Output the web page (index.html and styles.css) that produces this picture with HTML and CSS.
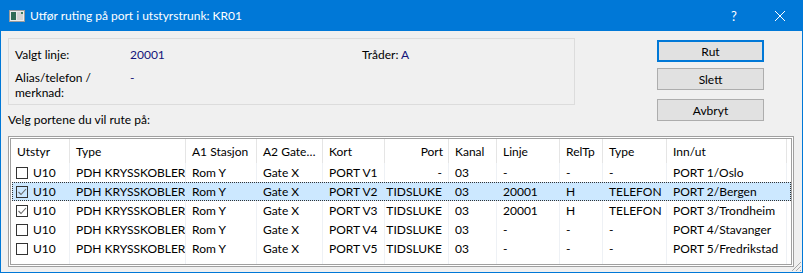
FILE: index.html
```html
<!DOCTYPE html>
<html lang="no">
<head>
<meta charset="utf-8">
<title>Utfør ruting</title>
<link rel="stylesheet" href="styles.css">
</head>
<body>
<div class="window">
  <div class="titlebar">
    <svg class="appicon" width="16" height="12" viewBox="0 0 16 12">
      <rect x="0.5" y="0.5" width="15" height="11" fill="#ececec" stroke="#9c9c9c"/>
      <rect x="2" y="2" width="5" height="8" fill="#2f6b55"/>
      <rect x="8" y="2" width="6" height="8" fill="#d4d4d4"/>
      <rect x="12" y="2" width="2" height="2" fill="#3f7f60"/>
    </svg>
    <span class="title">Utfør ruting på port i utstyrstrunk: KR01</span>
    <span class="tbtn help">?</span>
    <span class="tbtn close">
      <svg width="10" height="10" viewBox="0 0 10 10"><path d="M0 0L10 10M10 0L0 10" stroke="#fff" stroke-width="1"/></svg>
    </span>
  </div>
  <div class="content">
    <div class="top">
      <div class="left">
        <div class="panel">
          <span>Valgt linje:</span><span class="val">20001</span><span>Tråder: <span class="val">A</span></span>
          <span>Alias/telefon /<br>merknad:</span><span class="val">-</span><span></span>
        </div>
        <div class="prompt">Velg portene du vil rute på:</div>
      </div>
      <div class="buttons">
        <div class="btn default">Rut</div>
        <div class="btn">Slett</div>
        <div class="btn spaced">Avbryt</div>
      </div>
    </div>
    <div class="list">
      <div class="lv">
        <div class="cols head">
          <div class="cell">Utstyr</div>
          <div class="cell">Type</div>
          <div class="cell">A1 Stasjon</div>
          <div class="cell">A2 Gate…</div>
          <div class="cell">Kort</div>
          <div class="cell r">Port</div>
          <div class="cell">Kanal</div>
          <div class="cell">Linje</div>
          <div class="cell">RelTp</div>
          <div class="cell">Type</div>
          <div class="cell">Inn/ut</div>
        </div>
        <div class="cols row">
          <div class="cell"><span class="cb"></span>U10</div>
          <div class="cell">PDH KRYSSKOBLER</div>
          <div class="cell">Rom Y</div>
          <div class="cell">Gate X</div>
          <div class="cell">PORT V1</div>
          <div class="cell r">-</div>
          <div class="cell">03</div>
          <div class="cell">-</div>
          <div class="cell">-</div>
          <div class="cell">-</div>
          <div class="cell">PORT 1/Oslo</div>
        </div>
        <div class="cols row sel">
          <div class="cell"><span class="cb on"><svg width="10" height="10" viewBox="0 0 10 10"><path d="M1.5 5L4 7.5L9 2" fill="none" stroke="#6a6a6a" stroke-width="1.1"/></svg></span>U10</div>
          <div class="cell">PDH KRYSSKOBLER</div>
          <div class="cell">Rom Y</div>
          <div class="cell">Gate X</div>
          <div class="cell">PORT V2</div>
          <div class="cell r">TIDSLUKE</div>
          <div class="cell">03</div>
          <div class="cell">20001</div>
          <div class="cell">H</div>
          <div class="cell">TELEFON</div>
          <div class="cell">PORT 2/Bergen</div>
        </div>
        <div class="cols row">
          <div class="cell"><span class="cb on"><svg width="10" height="10" viewBox="0 0 10 10"><path d="M1.5 5L4 7.5L9 2" fill="none" stroke="#6a6a6a" stroke-width="1.1"/></svg></span>U10</div>
          <div class="cell">PDH KRYSSKOBLER</div>
          <div class="cell">Rom Y</div>
          <div class="cell">Gate X</div>
          <div class="cell">PORT V3</div>
          <div class="cell r">TIDSLUKE</div>
          <div class="cell">03</div>
          <div class="cell">20001</div>
          <div class="cell">H</div>
          <div class="cell">TELEFON</div>
          <div class="cell">PORT 3/Trondheim</div>
        </div>
        <div class="cols row">
          <div class="cell"><span class="cb"></span>U10</div>
          <div class="cell">PDH KRYSSKOBLER</div>
          <div class="cell">Rom Y</div>
          <div class="cell">Gate X</div>
          <div class="cell">PORT V4</div>
          <div class="cell r">TIDSLUKE</div>
          <div class="cell">03</div>
          <div class="cell">-</div>
          <div class="cell">-</div>
          <div class="cell">-</div>
          <div class="cell">PORT 4/Stavanger</div>
        </div>
        <div class="cols row">
          <div class="cell"><span class="cb"></span>U10</div>
          <div class="cell">PDH KRYSSKOBLER</div>
          <div class="cell">Rom Y</div>
          <div class="cell">Gate X</div>
          <div class="cell">PORT V5</div>
          <div class="cell r">TIDSLUKE</div>
          <div class="cell">03</div>
          <div class="cell">-</div>
          <div class="cell">-</div>
          <div class="cell">-</div>
          <div class="cell">PORT 5/Fredrikstad</div>
        </div>
        <div class="cols filler">
          <div class="cell"></div><div class="cell"></div><div class="cell"></div><div class="cell"></div>
          <div class="cell"></div><div class="cell"></div><div class="cell"></div><div class="cell"></div>
          <div class="cell"></div><div class="cell"></div><div class="cell"></div>
        </div>
      </div>
    </div>
  </div>
  <svg class="grip" width="12" height="12" viewBox="0 0 12 12">
    <path d="M11 2L2 11M11 6L6 11M11 10L10 11" stroke="#a8a8a8" stroke-width="1"/>
  </svg>
</div>
</body>
</html>
```
FILE: styles.css
```css
* { box-sizing: border-box; margin: 0; padding: 0; }
html, body { width: 803px; height: 273px; overflow: hidden; }
body {
  font-family: Lato, "Liberation Sans", sans-serif;
  font-size: 12px;
  color: #000;
  background: #f0f0f0;
}
.window {
  width: 803px;
  height: 273px;
  display: flex;
  flex-direction: column;
  position: relative;
  background: #f0f0f0;
}
.titlebar {
  height: 31px;
  flex: none;
  background: #0078d7;
  color: #fff;
  display: flex;
  align-items: center;
  padding-left: 9px;
}
.appicon { flex: none; margin-top: 0; }
.title { margin-left: 5px; flex: 1; font-size: 12px; }
.tbtn {
  width: 46px;
  height: 31px;
  display: flex;
  align-items: center;
  justify-content: center;
  font-size: 13px;
}
.close { padding-top: 0; }
.content {
  flex: 1;
  border: 1px solid #0078d7;
  border-top: 0;
  padding: 7px 8px 5px 7px;
  display: flex;
  flex-direction: column;
}
.top { display: flex; height: 89px; flex: none; }
.left { width: 567px; }
.panel {
  border: 1px solid #dcdcdc;
  padding: 8px 6px 4px 6px;
  display: grid;
  grid-template-columns: 115px 232px 1fr;
  row-gap: 8px;
  line-height: 15px;
}
.val { color: #14147a; }
.prompt { margin-top: 7px; line-height: 15px; }
.buttons { margin-left: 82px; margin-top: 2px; display: flex; flex-direction: column; }
.btn {
  width: 107px;
  height: 24px;
  background: #e1e1e1;
  border: 1px solid #adadad;
  display: flex;
  align-items: center;
  justify-content: center;
  margin-bottom: 6px;
}
.btn.default { border: 2px solid #0078d7; }
.btn.spaced { margin-top: 3px; }
.list {
  margin-top: 9px;
  height: 131px;
  width: 786px;
  border: 1px solid #a0a0a0;
  padding: 1px;
  background: #fff;
}
.lv {
  height: 100%;
  border: 1px solid #a0a0a0;
  display: flex;
  flex-direction: column;
  overflow: hidden;
}
.cols {
  display: grid;
  grid-template-columns: 59px 116px 71px 66px 62px 64px 48px 63px 43px 64px 120px;
  flex: none;
}
.cell {
  white-space: nowrap;
  overflow: hidden;
  padding-left: 6px;
  display: flex;
  align-items: center;
}
.cell.r { justify-content: flex-end; padding-right: 6px; padding-left: 0; }
.head { height: 24px; }
.head .cell { border-right: 1px solid #e5e5e5; }
.head .cell.r { padding-right: 5px; }
.row { height: 19px; position: relative; }
.row .cell { border-right: 1px solid #eef1f5; position: relative; }
.row .cell:first-child { padding-left: 5px; }
.row.sel::before {
  content: "";
  position: absolute;
  left: 1px; right: 0; top: 0; bottom: 0;
  background: #cce8ff;
  border: 1px dotted #333;
}
.row.sel .cell { border-right-color: transparent; }
.filler { flex: 1; }
.filler .cell { border-right: 1px solid #eef1f5; }
.cb {
  width: 12px;
  height: 12px;
  border: 1px solid #333;
  margin-right: 5px;
  flex: none;
  display: flex;
  align-items: center;
  justify-content: center;
}
.grip { position: absolute; right: 1px; bottom: 1px; }
```
